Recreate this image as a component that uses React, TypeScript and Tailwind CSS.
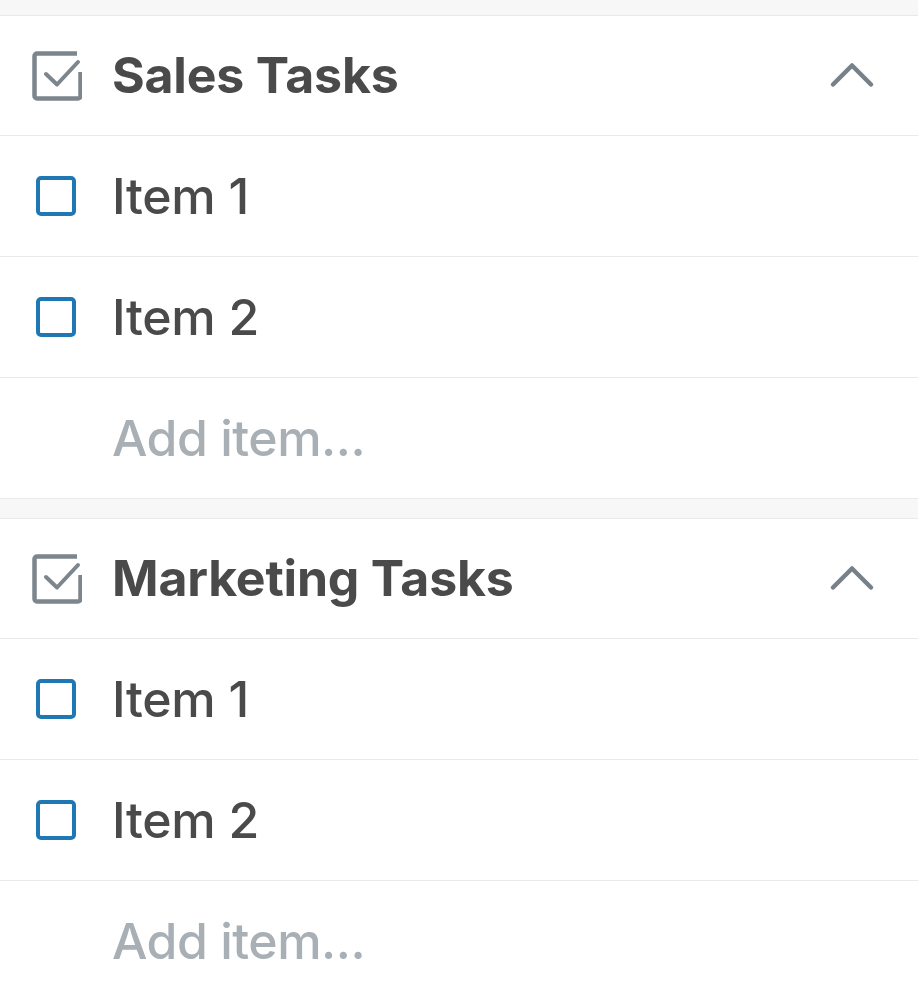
const SECTIONS = ["Sales Tasks", "Marketing Tasks"];
const ITEMS = ["Item 1", "Item 2"];

function HeaderCheck() {
  return (
    <svg width="50" height="50" viewBox="0 0 50 50" fill="none" className="shrink-0">
      <path
        d="M45 2.5H5A2.5 2.5 0 0 0 2.5 5v40A2.5 2.5 0 0 0 5 47.5h41a2.5 2.5 0 0 0 2.5-2.5V21"
        stroke="#7d868d"
        strokeWidth="4.5"
      />
      <path
        d="M14 23l11 10.5L46 11"
        stroke="#7d868d"
        strokeWidth="4"
        strokeLinecap="round"
        strokeLinejoin="round"
      />
    </svg>
  );
}

function Chevron() {
  return (
    <svg width="46" height="28" viewBox="0 0 46 28" fill="none">
      <path
        d="M4 22.5L23 3.5 42 22.5"
        stroke="#77818a"
        strokeWidth="4.5"
        strokeLinecap="round"
        strokeLinejoin="round"
      />
    </svg>
  );
}

function Section({ title }: { title: string }) {
  return (
    <section>
      <div className="h-[120px] flex items-center pl-[32px] pr-[43px] border-b border-[#e9e9e9]">
        <HeaderCheck />
        <h2 className="ml-[30px] flex-1 text-[50px] font-bold tracking-[-0.2px] text-[#4a4a4a]">{title}</h2>
        <Chevron />
      </div>
      {ITEMS.map((item) => (
        <div key={item} className="h-[121px] flex items-center pl-[36px] border-b border-[#e9e9e9]">
          <div className="w-[40px] h-[40px] rounded-[5px] border-[4px] border-[#1f78b4] shrink-0" />
          <span className="ml-[36px] text-[50px] font-[450] tracking-[-0.3px] text-[#4a4a4a]">{item}</span>
        </div>
      ))}
      <div className="h-[121px] flex items-center pl-[112px] border-b border-[#e9e9e9]">
        <span className="text-[50px] font-[450] tracking-[-0.5px] text-[#a8afb5]">Add item...</span>
      </div>
    </section>
  );
}

export default function App() {
  return (
    <div className="h-[999px] overflow-hidden bg-white font-['Inter',sans-serif]">
      <div className="h-[16px] bg-[#f7f7f7] border-b border-[#e9e9e9]" />
      <Section title={SECTIONS[0]} />
      <div className="h-[20px] bg-[#f7f7f7] border-b border-[#e9e9e9]" />
      <Section title={SECTIONS[1]} />
    </div>
  );
}
